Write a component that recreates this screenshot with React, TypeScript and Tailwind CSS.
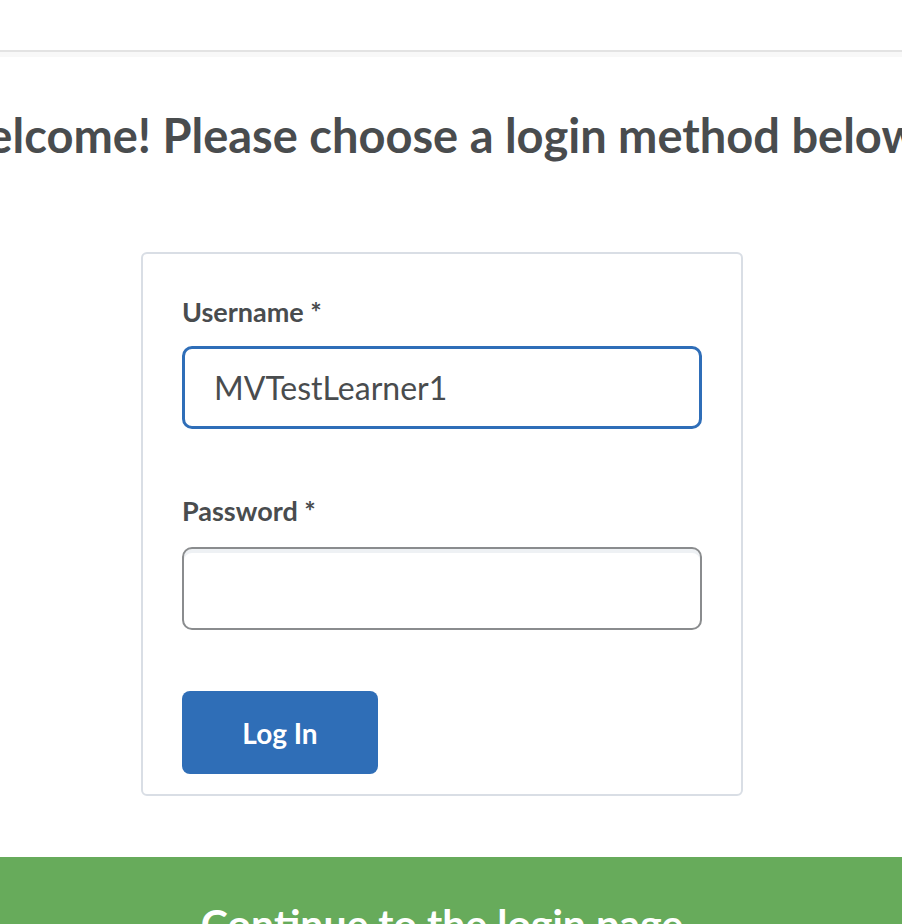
export default function App() {
  return (
    <div className="h-[924px] bg-white overflow-hidden" style={{ fontFamily: 'Lato, "Noto Sans", sans-serif' }}>
      <div className="h-[50px] bg-white" />
      <div className="h-[2px] bg-[#e3e3e3]" />
      <div className="h-[5px] bg-[#f8f8f8]" />

      <div className="w-[884px]">
        <div className="w-[860px] flex justify-center pt-[49px] h-[195px]">
          <h1 className="whitespace-nowrap text-[47px] font-bold leading-[58px] text-[#494c4e]">
            Welcome! Please choose a login method below
          </h1>
        </div>

        <div className="ml-[141px] w-[602px] rounded-[6px] border-2 border-[#d9dee5] px-[39px] pt-[42px] pb-[20px]">
          <label className="block text-[27px] font-bold leading-[32px] text-[#494c4e]">Username *</label>
          <div className="mt-[18px] h-[83px] rounded-[10px] border-[3px] border-[#2f6eb8] bg-white flex items-center pl-[29px]">
            <span className="text-[32px] text-[#494c4e]">MVTestLearner1</span>
          </div>

          <label className="mt-[66px] block text-[27px] font-bold leading-[32px] text-[#494c4e]">Password *</label>
          <div className="mt-[20px] h-[83px] rounded-[10px] border-2 border-[#8a8c8e] bg-white shadow-[inset_0_4px_0_#eef1f4]" />

          <button className="mt-[61px] h-[83px] w-[196px] rounded-[8px] bg-[#2f6eb7] text-[28px] font-bold text-white">
            Log In
          </button>
        </div>
      </div>

      <div className="mt-[61px] h-[200px] bg-[#67ab5b] pt-[42px]">
        <div className="w-[884px] flex justify-center">
          <span className="text-[41px] font-bold text-white leading-[50px]">Continue to the login page</span>
        </div>
      </div>
    </div>
  );
}
